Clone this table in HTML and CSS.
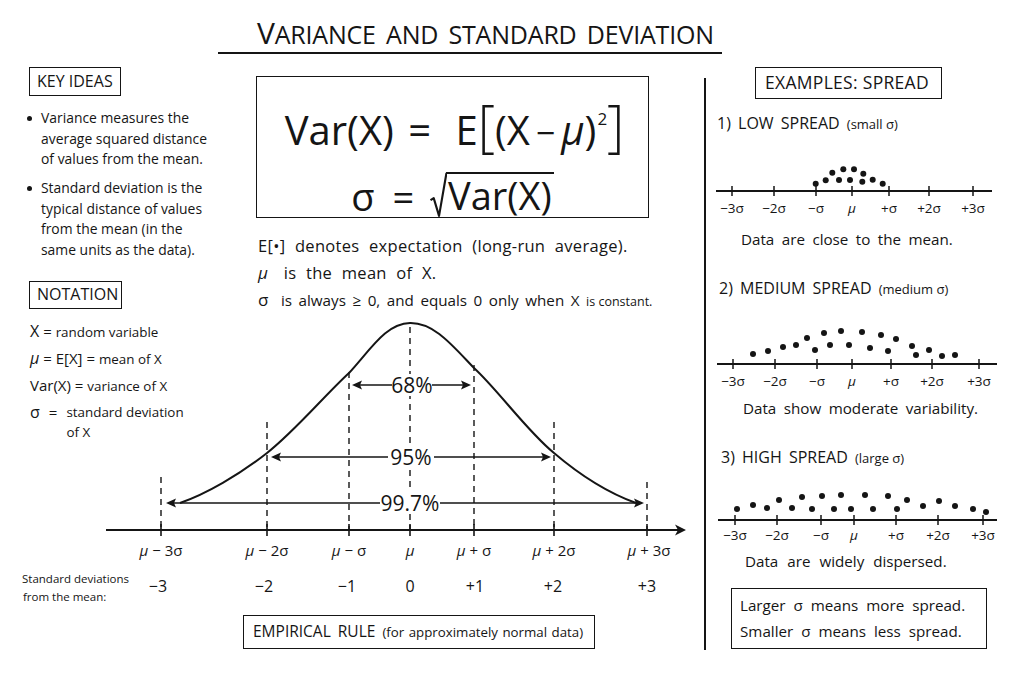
FILE: index.html
```html
<!DOCTYPE html>
<html lang="en">
<head>
<meta charset="utf-8">
<title>Variance and Standard Deviation</title>
<link rel="stylesheet" href="styles.css">
</head>
<body>
<div class="page">
  <header class="header">
    <h1 class="title"><span class="cap">V</span>ARIANCE AND STANDARD DEVIATION</h1>
  </header>
  <div class="main">
    <section class="left">
      <aside class="sidebar">
        <div class="tag key">KEY IDEAS</div>
        <ul class="ideas">
          <li>Variance measures the<br>average squared distance<br>of values from the mean.</li>
          <li>Standard deviation is the<br>typical distance of values<br>from the mean (in the<br>same units as the data).</li>
        </ul>
        <div class="tag notag">NOTATION</div>
        <div class="notation">
          <p><span class="sym">X</span> = <span class="w">random variable</span></p>
          <p><span class="sym mu">μ</span> = E[X] = <span class="w">mean of X</span></p>
          <p>Var(X) = <span class="w">variance of X</span></p>
          <p class="sd"><span class="sym">σ</span><span class="eq">=</span><span class="w">standard deviation<br>of X</span></p>
        </div>
      </aside>
      <div class="center">
        <div class="formula">
          <div class="f1">Var(X) <span class="eqs">=</span> E<span class="br">[</span>(X<span class="op">−</span><span class="mu">μ</span>)<sup>2</sup><span class="br">]</span></div>
          <div class="f2">σ <span class="eqs">=</span> <span class="sqrt"><svg class="rad-sign" viewBox="0 0 16 44" preserveAspectRatio="none"><path d="M0.5 27 L3.5 25 L8.5 42 L15.5 1" fill="none" stroke="#151515" stroke-width="2" stroke-linejoin="round"/></svg><span class="rad">Var(X)</span></span></div>
        </div>
        <div class="notes">
          <p class="n1">E[•] denotes expectation (long-run average).</p>
          <p class="n2"><span class="sym mu">μ</span> is the mean of X.</p>
          <p class="n3"><span class="sym">σ</span> is always ≥ 0, and equals 0 only when X <span class="sm">is constant.</span></p>
        </div>
      </div>
      <svg class="diagram" width="704" height="297" viewBox="0 313 704 297">
        <g class="dash" stroke="#151515" stroke-width="1.4" stroke-dasharray="6 5" fill="none">
          <line x1="161" y1="477" x2="161" y2="530"/>
          <line x1="267" y1="422" x2="267" y2="530"/>
          <line x1="349" y1="372" x2="349" y2="530"/>
          <line x1="410" y1="327" x2="410" y2="530"/>
          <line x1="474" y1="365" x2="474" y2="530"/>
          <line x1="554" y1="422" x2="554" y2="530"/>
          <line x1="647" y1="482" x2="647" y2="530"/>
        </g>
        <g stroke="#151515" stroke-width="1.6">
          <line x1="161" y1="524" x2="161" y2="536"/>
          <line x1="267" y1="524" x2="267" y2="536"/>
          <line x1="349" y1="524" x2="349" y2="536"/>
          <line x1="410" y1="524" x2="410" y2="536"/>
          <line x1="474" y1="524" x2="474" y2="536"/>
          <line x1="554" y1="524" x2="554" y2="536"/>
          <line x1="647" y1="524" x2="647" y2="536"/>
        </g>
        <path d="M180 503 C206 494 239 475 267 453 C295 431 325 395 349 373 C371 349 386 323.5 410 323 C434 322.5 452 345 474 368 C498 390 527 431 554 453 C581 476 611 494 636 503" fill="none" stroke="#151515" stroke-width="2"/>
        <line x1="106" y1="530" x2="680" y2="530" stroke="#151515" stroke-width="2"/>
        <path d="M686 530 L675 524.5 L678 530 L675 535.5 Z" fill="#151515"/>
        <g stroke="#151515" stroke-width="1.6">
          <line x1="356" y1="385" x2="392" y2="385"/>
          <line x1="432" y1="385" x2="467" y2="385"/>
          <line x1="276" y1="457" x2="388" y2="457"/>
          <line x1="434" y1="457" x2="546" y2="457"/>
          <line x1="171" y1="503" x2="380" y2="503"/>
          <line x1="440" y1="503" x2="639" y2="503"/>
        </g>
        <g fill="#151515">
          <path d="M352 385 L362 380.5 L360 385 L362 389.5 Z"/>
          <path d="M471 385 L461 380.5 L463 385 L461 389.5 Z"/>
          <path d="M271 457 L281 452.5 L279 457 L281 461.5 Z"/>
          <path d="M551 457 L541 452.5 L543 457 L541 461.5 Z"/>
          <path d="M166 503 L176 498.5 L174 503 L176 507.5 Z"/>
          <path d="M644 503 L634 498.5 L636 503 L634 507.5 Z"/>
        </g>
        <g fill="#ffffff">
          <rect x="393" y="374" width="38" height="22"/>
          <rect x="390" y="446" width="42" height="22"/>
          <rect x="382" y="492" width="57" height="22"/>
        </g>
        <g class="pct">
          <text x="412" y="385">68%</text>
          <text x="411" y="457">95%</text>
          <text x="410" y="503">99.7%</text>
        </g>
        <g class="axl">
          <text x="161" y="550"><tspan class="mu">μ</tspan> − 3σ</text>
          <text x="267" y="550"><tspan class="mu">μ</tspan> − 2σ</text>
          <text x="349" y="550"><tspan class="mu">μ</tspan> − σ</text>
          <text x="410" y="550"><tspan class="mu">μ</tspan></text>
          <text x="474" y="550"><tspan class="mu">μ</tspan> + σ</text>
          <text x="554" y="550"><tspan class="mu">μ</tspan> + 2σ</text>
          <text x="649" y="550"><tspan class="mu">μ</tspan> + 3σ</text>
        </g>
        <g class="num">
          <text x="158" y="586">−3</text>
          <text x="264" y="586">−2</text>
          <text x="347" y="586">−1</text>
          <text x="410" y="586">0</text>
          <text x="475" y="586">+1</text>
          <text x="553" y="586">+2</text>
          <text x="647" y="586">+3</text>
        </g>
        <g class="sdl">
          <text x="22" y="578">Standard deviations</text>
          <text x="23" y="596">from the mean:</text>
        </g>
      </svg>
      <div class="tag rule">EMPIRICAL RULE <span class="sm">(for approximately normal data)</span></div>
    </section>
    <div class="divider"></div>
    <section class="right">
      <div class="tag ex">EXAMPLES: SPREAD</div>
      <h2 class="case c1">1) LOW SPREAD <span class="sm">(small σ)</span></h2>
      <svg class="plot p1" width="318" height="85" viewBox="706 135 318 85">
        <line x1="716" y1="190" x2="992" y2="190" stroke="#151515" stroke-width="1.8"/>
        <g stroke="#151515" stroke-width="1.5">
          <line x1="732" y1="185" x2="732" y2="195"/><line x1="774" y1="185" x2="774" y2="195"/><line x1="816" y1="185" x2="816" y2="195"/><line x1="852" y1="185" x2="852" y2="195"/><line x1="889" y1="185" x2="889" y2="195"/><line x1="929" y1="185" x2="929" y2="195"/><line x1="973" y1="185" x2="973" y2="195"/>
        </g>
        <g fill="#151515">
          <circle cx="815.7" cy="182.7" r="3"/><circle cx="825.7" cy="179.3" r="3"/><circle cx="832.3" cy="171.7" r="3"/><circle cx="839" cy="179" r="3"/><circle cx="843.3" cy="168.3" r="3"/><circle cx="850" cy="179" r="3"/><circle cx="854" cy="168.3" r="3"/><circle cx="863.3" cy="172.7" r="3"/><circle cx="862.3" cy="180.7" r="3"/><circle cx="872.7" cy="178.7" r="3"/><circle cx="882.7" cy="182.7" r="3"/>
        </g>
        <g class="tl">
          <text x="732" y="207">−3σ</text><text x="774" y="207">−2σ</text><text x="816" y="207">−σ</text><text x="852" y="207" class="mu">μ</text><text x="889" y="207">+σ</text><text x="929" y="207">+2σ</text><text x="973" y="207">+3σ</text>
        </g>
      </svg>
      <p class="cap c1">Data are close to the mean.</p>
      <h2 class="case c2">2) MEDIUM SPREAD <span class="sm">(medium σ)</span></h2>
      <svg class="plot p2" width="318" height="93" viewBox="706 299 318 93">
        <line x1="717" y1="362" x2="997" y2="362" stroke="#151515" stroke-width="1.8"/>
        <g stroke="#151515" stroke-width="1.5">
          <line x1="733" y1="357" x2="733" y2="367"/><line x1="775" y1="357" x2="775" y2="367"/><line x1="817" y1="357" x2="817" y2="367"/><line x1="852" y1="357" x2="852" y2="367"/><line x1="891" y1="357" x2="891" y2="367"/><line x1="932" y1="357" x2="932" y2="367"/><line x1="979" y1="357" x2="979" y2="367"/>
        </g>
        <g fill="#151515">
          <circle cx="753" cy="352" r="3"/><circle cx="768" cy="349" r="3"/><circle cx="783" cy="345" r="3"/><circle cx="796" cy="343" r="3"/><circle cx="807" cy="336" r="3"/><circle cx="815" cy="348" r="3"/><circle cx="824" cy="331" r="3"/><circle cx="830" cy="343" r="3"/><circle cx="841" cy="329" r="3"/><circle cx="849" cy="343" r="3"/><circle cx="862" cy="330" r="3"/><circle cx="870" cy="346" r="3"/><circle cx="881" cy="333" r="3"/><circle cx="888" cy="349" r="3"/><circle cx="896" cy="337" r="3"/><circle cx="912" cy="344" r="3"/><circle cx="916" cy="353" r="3"/><circle cx="929" cy="348" r="3"/><circle cx="942" cy="354" r="3"/><circle cx="955" cy="353" r="3"/>
        </g>
        <g class="tl">
          <text x="733" y="379">−3σ</text><text x="775" y="379">−2σ</text><text x="817" y="379">−σ</text><text x="852" y="379" class="mu">μ</text><text x="891" y="379">+σ</text><text x="932" y="379">+2σ</text><text x="979" y="379">+3σ</text>
        </g>
      </svg>
      <p class="cap c2">Data show moderate variability.</p>
      <h2 class="case c3">3) HIGH SPREAD <span class="sm">(large σ)</span></h2>
      <svg class="plot p3" width="318" height="78" viewBox="706 467 318 78">
        <line x1="718" y1="517" x2="997" y2="517" stroke="#151515" stroke-width="1.8"/>
        <g stroke="#151515" stroke-width="1.5">
          <line x1="735" y1="512" x2="735" y2="522"/><line x1="777" y1="512" x2="777" y2="522"/><line x1="821" y1="512" x2="821" y2="522"/><line x1="854" y1="512" x2="854" y2="522"/><line x1="896" y1="512" x2="896" y2="522"/><line x1="938" y1="512" x2="938" y2="522"/><line x1="983" y1="512" x2="983" y2="522"/>
        </g>
        <g fill="#151515">
          <circle cx="737" cy="506" r="3"/><circle cx="753" cy="502" r="3"/><circle cx="767" cy="505" r="3"/><circle cx="779" cy="497" r="3"/><circle cx="792" cy="505" r="3"/><circle cx="802" cy="494" r="3"/><circle cx="812" cy="506" r="3"/><circle cx="822" cy="493" r="3"/><circle cx="834" cy="506" r="3"/><circle cx="841" cy="492" r="3"/><circle cx="851" cy="506" r="3"/><circle cx="865" cy="492" r="3"/><circle cx="873" cy="506" r="3"/><circle cx="888" cy="493" r="3"/><circle cx="897" cy="506" r="3"/><circle cx="907" cy="497" r="3"/><circle cx="923" cy="503" r="3"/><circle cx="939" cy="498" r="3"/><circle cx="955" cy="503" r="3"/><circle cx="973" cy="506" r="3"/><circle cx="986" cy="509" r="3"/>
        </g>
        <g class="tl">
          <text x="735" y="532">−3σ</text><text x="777" y="532">−2σ</text><text x="821" y="532">−σ</text><text x="854" y="532" class="mu">μ</text><text x="896" y="532">+σ</text><text x="938" y="532">+2σ</text><text x="983" y="532">+3σ</text>
        </g>
      </svg>
      <p class="cap c3">Data are widely dispersed.</p>
      <div class="tag summary">
        <p>Larger σ means more spread.</p>
        <p>Smaller σ means less spread.</p>
      </div>
    </section>
  </div>
</div>
</body>
</html>
```
FILE: styles.css
```css
* { box-sizing: border-box; }

html, body {
  margin: 0;
  padding: 0;
  background: #ffffff;
}

body {
  color: #151515;
  font-family: "Open Sans", "Noto Sans", "DejaVu Sans", sans-serif;
}

.page {
  width: 1024px;
  height: 683px;
  overflow: hidden;
  background: #ffffff;
}

.mu { font-style: italic; }

/* ---------- header ---------- */
.header {
  height: 62px;
  padding-top: 17px;
}

.title {
  display: inline-block;
  margin: 0 0 0 218px;
  padding: 0 8px 1px 4px;
  border-bottom: 2px solid #151515;
  font-size: 25px;
  line-height: 34px;
  font-weight: 400;
  letter-spacing: -0.2px;
  word-spacing: 4px;
  white-space: nowrap;
}

.title .cap { font-size: 30px; }

/* ---------- main grid ---------- */
.main {
  display: grid;
  grid-template-columns: 704px 2px 318px;
  height: 621px;
}

.divider {
  background: #151515;
  margin-top: 16px;
  height: 572px;
}

.tag {
  display: inline-block;
  border: 1.5px solid #151515;
}

.sm { font-size: 0.8em; }

/* ---------- left area ---------- */
.left {
  display: grid;
  grid-template-columns: 240px 464px;
  grid-template-rows: 251px 297px auto;
}

.sidebar {
  grid-column: 1;
  grid-row: 1 / 3;
  z-index: 1;
  align-self: start;
}

.key {
  margin: 5px 0 0 29px;
  height: 29px;
  padding: 0 7px;
  font-size: 16px;
  line-height: 26px;
}

.ideas {
  list-style: none;
  margin: 12px 0 0 0;
  padding: 0 0 0 41px;
  font-size: 13.9px;
  line-height: 20.5px;
  white-space: nowrap;
}

.ideas li { position: relative; }
.ideas li + li { margin-top: 8.5px; }

.ideas li::before {
  content: "";
  position: absolute;
  left: -14px;
  top: 8px;
  width: 5px;
  height: 5px;
  border-radius: 50%;
  background: #151515;
}

.notag {
  display: block;
  width: 93px;
  margin: 21px 0 0 29px;
  height: 28px;
  padding: 0 7px;
  font-size: 16px;
  line-height: 25px;
}

.notation {
  margin: 9px 0 0 30px;
  font-size: 15px;
  white-space: nowrap;
}

.notation p {
  margin: 0;
  line-height: 26px;
}

.notation .w { font-size: 13.4px; }
.notation .sym { font-size: 16px; }

.notation .sd {
  display: flex;
  margin-top: 3px;
  line-height: 20px;
}

.notation .sd .eq { margin: 0 9px 0 9px; }
.notation .sd .w { line-height: 20px; }

/* ---------- centre ---------- */
.center {
  grid-column: 2;
  grid-row: 1;
}

.formula {
  margin: 14px 0 0 16px;
  width: 393px;
  height: 142px;
  border: 1.5px solid #151515;
  padding-top: 17px;
  text-align: center;
}

.f1 {
  font-size: 40px;
  line-height: 50px;
  white-space: nowrap;
  padding-left: 4px;
}

.f1 .eqs { margin: 0 14px 0 4px; }

.f1 .br {
  display: inline-block;
  font-size: 54px;
  line-height: 40px;
  font-weight: 300;
  transform: scaleY(1.05);
}

.f1 .op { margin: 0 6px; font-size: 34px; }

.f1 sup {
  font-size: 17px;
  vertical-align: 20px;
  margin-left: 1px;
}

.f2 {
  margin-top: 14px;
  font-size: 38px;
  line-height: 50px;
  white-space: nowrap;
  padding-left: 0;
}

.f2 .eqs { margin: 0 6px 0 8px; }

.sqrt {
  display: inline-flex;
  align-items: stretch;
  vertical-align: -7px;
  height: 46px;
}

.rad-sign {
  display: block;
  width: 17px;
  height: 46px;
}

.rad {
  border-top: 2px solid #151515;
  line-height: 42px;
  padding: 0 2px 0 2px;
  margin-left: -1px;
}

.notes {
  margin: 14px 0 0 18px;
  line-height: 27px;
  white-space: nowrap;
}

.notes p { margin: 0; }

.notes .n1, .notes .n2 {
  font-size: 16.5px;
  letter-spacing: 0.3px;
  word-spacing: 5px;
}

.notes .n3 {
  font-size: 15.2px;
  word-spacing: 2.6px;
}

.notes .sym { font-size: 17px; margin-right: 6px; }
.notes .sm { font-size: 12.5px; word-spacing: 0; }

/* ---------- diagram ---------- */
.diagram {
  grid-column: 1 / 3;
  grid-row: 2;
  display: block;
}

.diagram text, .plot text {
  font-family: "Open Sans", "Noto Sans", "DejaVu Sans", sans-serif;
  fill: #151515;
  dominant-baseline: central;
  text-anchor: middle;
}

.pct text { font-size: 21px; }
.axl text { font-size: 15px; }
.num text { font-size: 16px; }
.sdl text { font-size: 11.5px; text-anchor: start; }

.rule {
  grid-column: 1 / 3;
  grid-row: 3;
  justify-self: start;
  margin: 5px 0 0 243px;
  width: 352px;
  height: 34px;
  padding: 0 0 0 9px;
  font-size: 15.5px;
  line-height: 31px;
  white-space: nowrap;
  word-spacing: 3px;
}

.rule .sm { font-size: 13.3px; word-spacing: 1px; }

/* ---------- right panel ---------- */
.right {
  display: flex;
  flex-direction: column;
  align-items: flex-start;
}

.ex {
  margin: 5px 0 0 49px;
  width: 187px;
  height: 32px;
  padding: 0 0 0 9px;
  font-size: 17.5px;
  line-height: 29px;
  letter-spacing: 0.3px;
  white-space: nowrap;
}

.case {
  margin: 0 0 0 13px;
  font-size: 16px;
  line-height: 24px;
  font-weight: 400;
  white-space: nowrap;
  word-spacing: 3px;
}

.case .sm { font-size: 13px; word-spacing: 0; }

.c1.case { margin-top: 12px; margin-left: 11px; }
.c2.case { margin-top: 25px; margin-left: 13px; }
.c3.case { margin-top: 25px; margin-left: 15px; }

.plot { display: block; }
.tl text { font-size: 13.5px; }

.cap {
  margin: 0 0 0 35px;
  font-size: 15.2px;
  line-height: 24px;
  white-space: nowrap;
  word-spacing: 3.5px;
}

.cap.c1 { margin-top: 6px; }
.cap.c2 { margin-top: 2px; margin-left: 37px; }
.cap.c3 { margin-top: 1px; margin-left: 39px; word-spacing: 5px; }

.summary {
  margin: 15px 0 0 25px;
  width: 256px;
  height: 61px;
  padding: 4px 0 0 8px;
  font-size: 15.2px;
  word-spacing: 4px;
  white-space: nowrap;
}

.summary p {
  margin: 0;
  line-height: 25.5px;
}
```
